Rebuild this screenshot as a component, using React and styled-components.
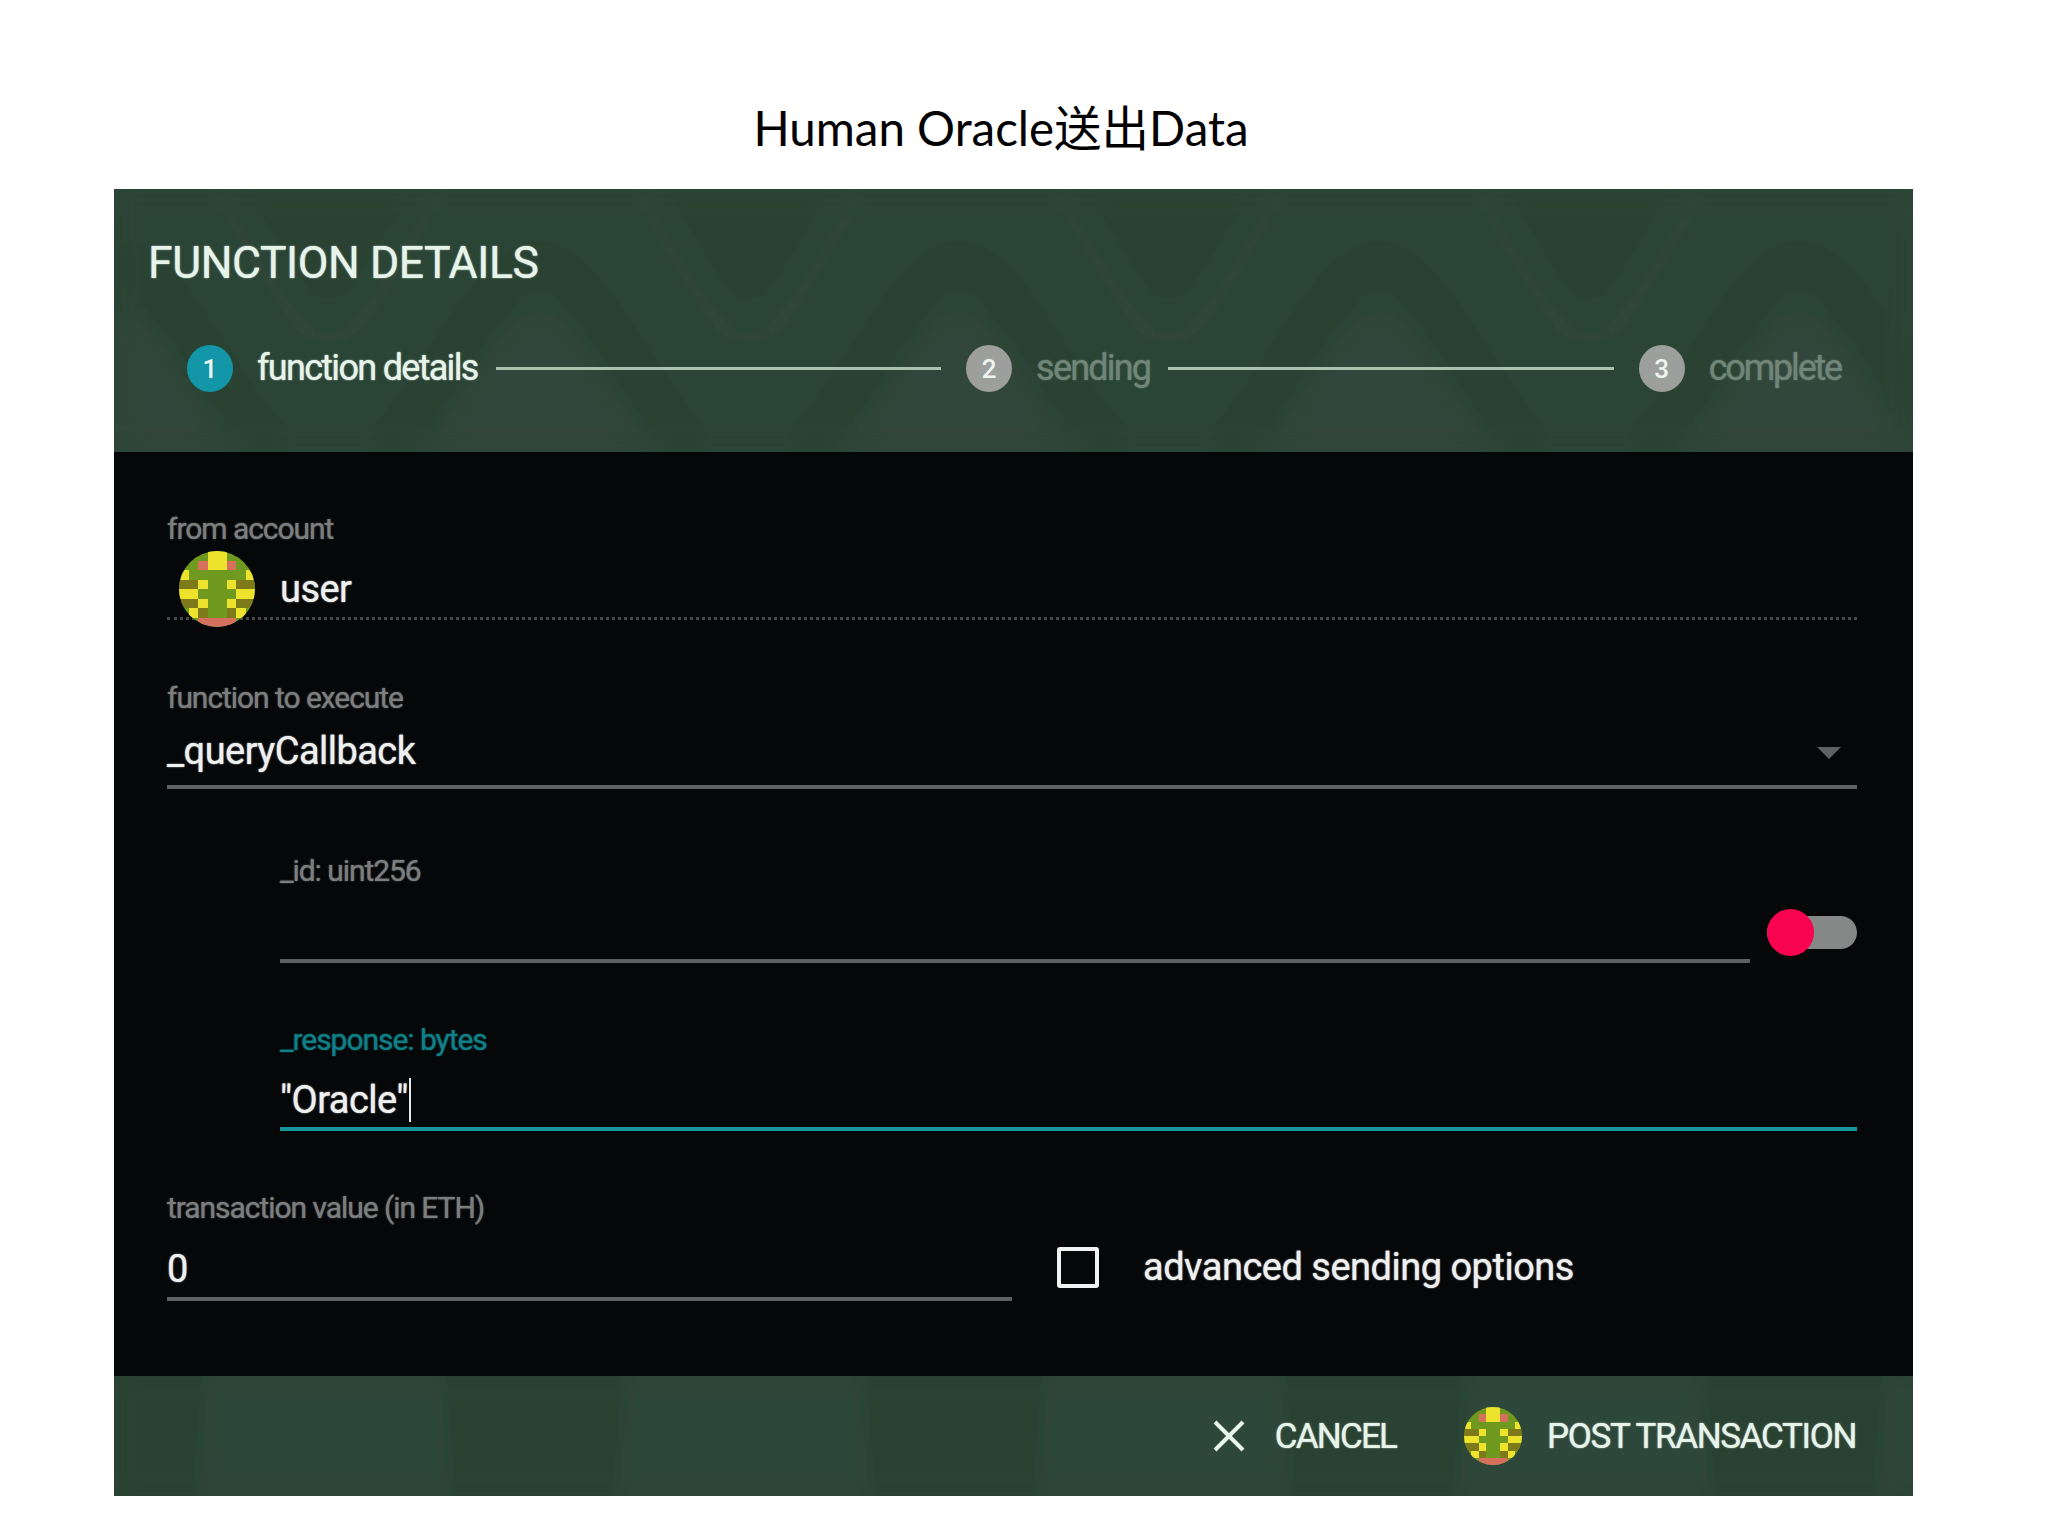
import React from 'react';
import styled, { createGlobalStyle } from 'styled-components';

const GlobalStyle = createGlobalStyle`
  html, body {
    margin: 0;
    background: #fff;
  }
  * {
    box-sizing: border-box;
  }
`;

const Slide = styled.div`
  width: 2048px;
  height: 1536px;
  font-family: Roboto, "Liberation Sans", sans-serif;
`;

const SlideTitle = styled.h1`
  margin: 0;
  height: 189px;
  padding: 99px 46px 0 0;
  text-align: center;
  font: 400 47.5px/58px Lato, "Noto Sans CJK SC", sans-serif;
  color: #000;
`;

const Panel = styled.section`
  display: flex;
  flex-direction: column;
  width: 1799px;
  height: 1307px;
  margin-left: 114px;
  background: #050708;
`;

const Banner = styled.header`
  position: relative;
  overflow: hidden;
  flex: none;
  height: ${props => props.$height}px;
  background: ${props => props.$base};
`;

const WaveLayer = styled.svg`
  position: absolute;
  inset: 0;
  width: 100%;
  height: 100%;
`;

const BannerContent = styled.div`
  position: relative;
  height: 100%;
`;

const DialogTitle = styled.h2`
  margin: 0;
  padding: 49px 0 0 34px;
  font-size: 44.5px;
  line-height: 50px;
  font-weight: 400;
  letter-spacing: -0.4px;
  color: #e6f4ea;
  text-shadow: 0 0 1.5px #e6f4ea;
`;

const Stepper = styled.div`
  display: flex;
  align-items: center;
  margin-top: 57px;
  padding: 0 72px 0 73px;
`;

const StepDot = styled.span`
  display: flex;
  align-items: center;
  justify-content: center;
  flex: none;
  width: 46px;
  height: 47px;
  margin-right: 24px;
  border-radius: 50%;
  font-size: 26px;
  font-weight: 500;
  color: #eef5f0;
  background: ${props => (props.$active ? '#1397a8' : '#9d9f9c')};
`;

const StepText = styled.span`
  font-size: 36px;
  line-height: 47px;
  letter-spacing: ${props => props.$spacing}px;
  color: ${props => (props.$active ? '#e6f4ea' : '#6f8678')};
  text-shadow: 0 0 1.5px ${props => (props.$active ? '#e6f4ea' : '#6f8678')};
`;

const StepLine = styled.span`
  flex: 1;
  height: 3px;
  margin: 0 25px 0 18px;
  background: #a9c2b0;
`;

const Form = styled.div`
  flex: 1;
  padding: 59px 56px 0 53px;
`;

const Field = styled.div`
  margin-top: ${props => props.$top || 0}px;
  flex: ${props => (props.$grow ? 1 : 'none')};
  width: ${props => (props.$width ? `${props.$width}px` : 'auto')};
`;

const Label = styled.div`
  height: 36px;
  font-size: 30px;
  line-height: 36px;
  letter-spacing: -1.05px;
  color: ${props => (props.$focus ? '#0f8087' : '#7c7e7e')};
  text-shadow: 0 0 1.5px ${props => (props.$focus ? '#0f8087' : '#7c7e7e')};
`;

const Value = styled.div`
  display: flex;
  align-items: center;
  height: ${props => props.$height || 70}px;
  padding-top: ${props => props.$pad || 0}px;
  font-size: 38px;
  letter-spacing: -0.55px;
  color: #eef0ef;
  text-shadow: 0 0 1.5px #eef0ef;
`;

const Underline = styled.div`
  height: 4px;
  margin-bottom: -1px;
  background: ${props => (props.$focus ? '#17969c' : '#5f6160')};
`;

const DottedLine = styled.div`
  border-top: 3px dotted #464948;
`;

const AccountName = styled.span`
  margin-left: 25px;
`;

const AvatarSvg = styled.svg`
  flex: none;
  width: ${props => props.$size}px;
  height: ${props => props.$size}px;
  margin-left: ${props => props.$left || 0}px;
`;

const Caret = styled.span`
  margin: 4px 16px 0 auto;
  border-left: 12px solid transparent;
  border-right: 12px solid transparent;
  border-top: 12px solid #5f6160;
`;

const Cursor = styled.span`
  width: 2px;
  height: 44px;
  margin-left: 1px;
  background: #e8e8e8;
`;

const Params = styled.div`
  padding-left: 113px;
`;

const ParamRow = styled.div`
  display: flex;
  align-items: flex-end;
`;

const Switch = styled.span`
  position: relative;
  flex: none;
  width: 90px;
  height: 33px;
  margin: 0 0 13px 17px;
  border-radius: 17px;
  background: #868887;
`;

const SwitchKnob = styled.span`
  position: absolute;
  top: -7px;
  left: 0;
  width: 47px;
  height: 47px;
  border-radius: 50%;
  background: #f8034f;
`;

const BottomRow = styled.div`
  display: flex;
  align-items: flex-end;
`;

const CheckOption = styled.label`
  display: flex;
  align-items: center;
  margin: 0 0 11px 45px;
  font-size: 38px;
  letter-spacing: -0.5px;
  color: #eef0ef;
  text-shadow: 0 0 1.5px #eef0ef;
`;

const CheckBox = styled.span`
  flex: none;
  width: 42px;
  height: 41px;
  margin-right: 44px;
  border: 4px solid #f2f2f2;
  border-radius: 3px;
`;

const Actions = styled.div`
  display: flex;
  align-items: center;
  justify-content: flex-end;
  height: 100%;
  padding-right: 57px;
`;

const ActionButton = styled.span`
  display: flex;
  align-items: center;
  margin-left: ${props => props.$left || 0}px;
  font-size: 35px;
  letter-spacing: ${props => props.$spacing}px;
  color: #e6f4ea;
  text-shadow: 0 0 1.5px #e6f4ea;
`;

const CloseIcon = styled.svg`
  width: 34px;
  height: 34px;
  margin-right: 29px;
`;

const ButtonAvatar = styled.span`
  display: flex;
  margin-right: 25px;
`;

const YELLOW = [
  [3, 0], [4, 0], [3, 1], [4, 1], [0, 2], [7, 2], [2, 3], [5, 3],
  [0, 4], [1, 4], [6, 4], [7, 4], [2, 5], [5, 5], [1, 6], [6, 6],
];
const OLIVE = [
  [0, 3], [1, 3], [6, 3], [7, 3], [0, 5], [1, 5], [6, 5], [7, 5], [2, 6], [5, 6],
];
const SALMON = [[2, 1], [5, 1], [2, 7], [3, 7], [4, 7], [5, 7]];

const Identicon = ({ id, size, left }) => (
  <AvatarSvg $size={size} $left={left} viewBox="0 0 8 8">
    <clipPath id={id}>
      <circle cx="4" cy="4" r="4" />
    </clipPath>
    <g clipPath={`url(#${id})`} shapeRendering="crispEdges">
      <rect width="8" height="8" fill="#6f9a1f" />
      {OLIVE.map(([x, y]) => (
        <rect key={`o${x}${y}`} x={x} y={y} width="1" height="1" fill="#7d7a1a" />
      ))}
      {SALMON.map(([x, y]) => (
        <rect key={`s${x}${y}`} x={x} y={y} width="1" height="1" fill="#d4705c" />
      ))}
      {YELLOW.map(([x, y]) => (
        <rect key={`y${x}${y}`} x={x} y={y} width="1" height="1" fill="#eee32c" />
      ))}
    </g>
  </AvatarSvg>
);

const Waves = ({ id, height, shift, blur, children }) => (
  <WaveLayer>
    <defs>
      <pattern id={id} width="420" height={height} patternUnits="userSpaceOnUse" x={shift}>
        {children}
      </pattern>
      <filter id={`${id}-blur`} x="0" y="0" width="100%" height="100%">
        <feGaussianBlur stdDeviation={blur} />
      </filter>
    </defs>
    <rect width="100%" height="100%" fill={`url(#${id})`} filter={`url(#${id}-blur)`} />
  </WaveLayer>
);

const App = () => (
  <Slide>
    <GlobalStyle />
    <SlideTitle>Human Oracle送出Data</SlideTitle>
    <Panel>
      <Banner $height={263} $base="#2c4435">
        <Waves id="head-waves" height={263} shift={215} blur={13}>
          <rect width="420" height="263" fill="#2c4435" />
          <path d="M50 263 C 110 210, 160 75, 210 75 C 260 75, 310 210, 370 263" fill="none" stroke="#2a4232" strokeWidth="46" />
          <path d="M85 263 C 145 235, 165 130, 210 130 C 255 130, 275 235, 335 263 Z" fill="#30473a" />
          <path d="M-85 0 C -50 50, -25 112, 0 112 C 25 112, 50 50, 85 0 Z" fill="#2a4232" />
          <path d="M335 0 C 370 50, 395 112, 420 112 C 445 112, 470 50, 505 0 Z" fill="#2a4232" />
          <path d="M-115 0 C -70 70, -35 150, 0 150 C 35 150, 70 70, 115 0" fill="none" stroke="#2f4639" strokeWidth="16" />
          <path d="M305 0 C 350 70, 385 150, 420 150 C 455 150, 490 70, 535 0" fill="none" stroke="#2f4639" strokeWidth="16" />
        </Waves>
        <BannerContent>
          <DialogTitle>FUNCTION DETAILS</DialogTitle>
          <Stepper>
            <StepDot $active>1</StepDot>
            <StepText $active $spacing={-1.7}>function details</StepText>
            <StepLine />
            <StepDot>2</StepDot>
            <StepText $spacing={-1.8}>sending</StepText>
            <StepLine />
            <StepDot>3</StepDot>
            <StepText $spacing={-2.2}>complete</StepText>
          </Stepper>
        </BannerContent>
      </Banner>

      <Form>
        <Field>
          <Label>from account</Label>
          <Value $pad={13}>
            <Identicon id="account-avatar" size={76} left={12} />
            <AccountName>user</AccountName>
          </Value>
          <DottedLine />
        </Field>

        <Field $top={60}>
          <Label>function to execute</Label>
          <Value $height={69}>
            _queryCallback
            <Caret />
          </Value>
          <Underline />
        </Field>

        <Params>
          <ParamRow>
            <Field $top={65} $grow>
              <Label>_id: uint256</Label>
              <Value />
              <Underline />
            </Field>
            <Switch>
              <SwitchKnob />
            </Switch>
          </ParamRow>

          <Field $top={60}>
            <Label $focus>_response: bytes</Label>
            <Value $height={69} $pad={14}>
              "Oracle"
              <Cursor />
            </Value>
            <Underline $focus />
          </Field>
        </Params>

        <BottomRow>
          <Field $top={60} $width={845}>
            <Label>transaction value (in ETH)</Label>
            <Value $height={71} $pad={14}>0</Value>
            <Underline />
          </Field>
          <CheckOption>
            <CheckBox />
            advanced sending options
          </CheckOption>
        </BottomRow>
      </Form>

      <Banner $height={120} $base="#2a4233">
        <Waves id="foot-waves" height={120} shift={0} blur={10}>
          <rect width="420" height="120" fill="#2a4233" />
          <path d="M95 0 L325 0 L335 120 L85 120 Z" fill="#2f473a" />
        </Waves>
        <BannerContent>
          <Actions>
            <ActionButton $spacing={-1.8}>
              <CloseIcon viewBox="0 0 34 34">
                <path d="M3 3 L31 31 M31 3 L3 31" stroke="#e6f4ea" strokeWidth="4" fill="none" />
              </CloseIcon>
              CANCEL
            </ActionButton>
            <ActionButton $left={68} $spacing={-1.35}>
              <ButtonAvatar>
                <Identicon id="button-avatar" size={58} />
              </ButtonAvatar>
              POST TRANSACTION
            </ActionButton>
          </Actions>
        </BannerContent>
      </Banner>
    </Panel>
  </Slide>
);

export default App;
